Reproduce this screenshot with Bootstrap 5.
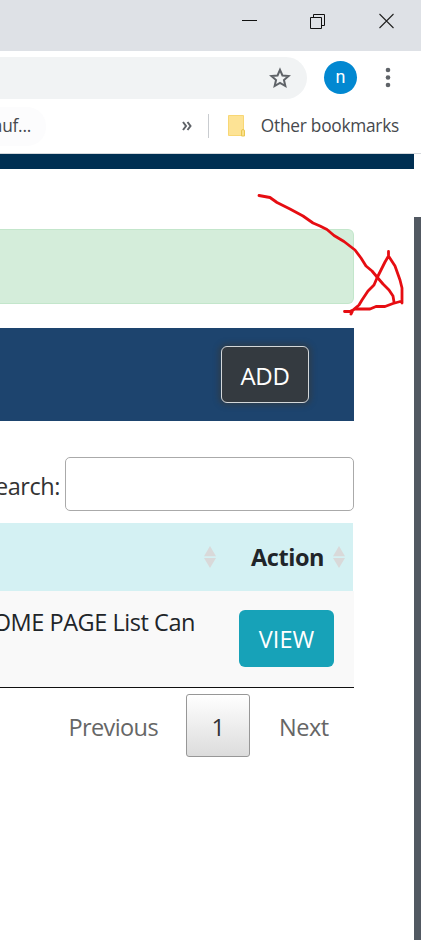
<!DOCTYPE html>
<html lang="en">
<head>
<meta charset="utf-8">
<meta name="viewport" content="width=device-width, initial-scale=1">
<title>Home page list</title>
<link href="https://cdn.jsdelivr.net/npm/bootstrap@5.3.0/dist/css/bootstrap.min.css" rel="stylesheet">
<style>
body{font-family:"Open Sans","Noto Sans",sans-serif;font-size:23.5px;line-height:36px;letter-spacing:-.45px;color:#212529;background:#fff;width:421px;height:940px;overflow:hidden}
svg{display:block;flex:none}
.titlebar{height:51px;background:#dee1e6;padding:13px 26px 0 242px}
.restore{margin-right:2px}
.toolbar{height:54px;padding:6px 26px 0 0}
.omnibox{width:307px;height:42px;background:#f1f3f4;border-radius:0 21px 21px 0;padding-right:16px}
.avatar{width:33px;height:33px;background:#0288d1;color:#fff;font:400 18px/31px Roboto,sans-serif;margin-left:17px;letter-spacing:0}
.bookmarks{height:49px;border-bottom:1px solid #d5d8dc;font-size:17.3px;line-height:24px;letter-spacing:-.25px;color:#46494d;padding-bottom:6px}
.bm-tab{width:46px;height:39px;border-radius:0 19px 19px 0;background:#fcfcfd;padding-right:15px}
.bm-more{margin-left:136px}
.bm-rule{width:1px;height:24px;background:#c9ccd0;margin-left:16px}
.bm-other{margin-left:auto;margin-right:22px}
.page-col{width:414px}
.brandbar{height:15px;background:#002f52}
.inner{width:354px}
.notice{height:75px;margin-top:60px;background:#d4edda;border:1px solid #c3e6cb;border-left:0;border-radius:0 6px 6px 0}
.panel-head{height:93px;margin-top:24px;background:#1d446e;padding:18px 45px 0 0}
.btn-add,.btn-view{height:57px;line-height:36px;color:#fff;border-radius:6px;flex:none}
.btn-add{width:88px;font-size:24px;letter-spacing:-.3px;background:#343a40;border:1px solid #d3d7da;padding:2px 0 0;box-shadow:0 0 5px 3px rgba(52,58,64,.6)}
.btn-view{width:95px;font-size:23.5px;letter-spacing:0;background:#17a2b8;border:0;padding:0}
.search-line{height:54px;margin-top:36px;color:#333}
.search-line label{padding-top:3px}
.search-line input{width:289px;height:54px;border:1px solid #aaa;border-radius:5px;padding:5px;margin-left:5px;background:transparent}
.head-row{width:353px;height:68px;margin-top:12px;background:#d4f1f3;font-weight:700;padding-right:8px}
.head-row span{margin:0 9px 0 35px}
.data-row{height:97px;background:#f9f9f9;border-bottom:1px solid #111;padding:19px 20px 0 0}
.data-row>span{margin-top:-6px;margin-right:44px}
.pager{height:63px;margin-top:6px;color:#666}
.pager .current{width:64px;height:63px;border:1px solid #979797;border-radius:3px;background:linear-gradient(#fff,#dcdcdc);color:#333;padding-top:3px}
.pager .prev{margin-right:28px;padding-top:3px;letter-spacing:-.6px}
.pager .next{width:49px;margin:0 26px 0 29px;padding-top:3px;letter-spacing:-.5px}
.scroller{width:7px;height:723px;margin-top:63px;background:#525962}
.drawn{left:250px;top:185px}
</style>
<script src="https://cdn.jsdelivr.net/npm/bootstrap@5.3.0/dist/js/bootstrap.bundle.min.js"></script>
</head>
<body class="position-relative text-nowrap">
<header>
  <div class="titlebar d-flex justify-content-between">
    <svg width="16" height="16"><path d="M0 7.500h15" stroke="#111"/></svg>
    <svg class="restore" width="16" height="17" fill="none" stroke="#111"><path d="M.5 4.500h11v11H.5zM3.500 4.500v-3h11v11h-3"/></svg>
    <svg width="16" height="16" fill="none" stroke="#222" stroke-width="1.100"><path d="M.5 1l14 14M14.500 1l-14 14"/></svg>
  </div>
  <div class="toolbar d-flex align-items-start">
    <div class="omnibox d-flex justify-content-end align-items-center">
      <svg width="22" height="22" viewBox="0 0 22 22" fill="none" stroke="#5f6368" stroke-width="2"><path d="M11 2.800l2.450 5.650 6.150.55-4.650 4.050 1.400 6L11 15.900l-5.350 3.150 1.400-6L2.400 9l6.150-.55z"/></svg>
    </div>
    <div class="avatar rounded-circle text-center mt-1">n</div>
    <svg class="ms-auto mt-2" width="14" height="26" fill="#5f6368"><circle cx="7" cy="5" r="2.300"/><circle cx="7" cy="12.500" r="2.300"/><circle cx="7" cy="20" r="2.300"/></svg>
  </div>
  <div class="bookmarks d-flex align-items-center">
    <div class="bm-tab d-flex justify-content-end align-items-center">auf...</div>
    <svg class="bm-more" width="10" height="10" fill="none" stroke="#5f6368" stroke-width="2"><path d="M1 1l3 4-3 4M5.500 1l3 4-3 4"/></svg>
    <div class="bm-rule"></div>
    <svg class="ms-3" width="22" height="24"><path d="M3.500 1.500h15v20h-15z" fill="#fde395" stroke="#f8d775"/><path d="M16.500 22v-5a1.500 1.500 0 0 1 3 0v5z" fill="#fbe08a" stroke="#e9c750"/></svg>
    <span class="bm-other">Other bookmarks</span>
  </div>
</header>
<div class="d-flex">
  <main class="page-col">
    <div class="brandbar"></div>
    <div class="inner">
      <div class="notice"></div>
      <div class="panel-head d-flex justify-content-end"><button class="btn btn-add">ADD</button></div>
      <div class="search-line d-flex justify-content-end align-items-center"><label for="q">earch:</label><input id="q" type="text"></div>
      <div class="head-row d-flex justify-content-end align-items-center">
        <svg width="12" height="22" fill="#d9d9d9"><path d="M6 0l6 10.300H0zM0 12h12L6 22z"/></svg>
        <span>Action</span>
        <svg width="12" height="22" fill="#d9d9d9"><path d="M6 0l6 10.300H0zM0 12h12L6 22z"/></svg>
      </div>
      <div class="data-row d-flex justify-content-end align-items-start"><span>OME PAGE List Can</span><button class="btn btn-view">VIEW</button></div>
      <div class="pager d-flex justify-content-end align-items-center"><span class="prev">Previous</span><span class="current d-flex align-items-center justify-content-center">1</span><span class="next">Next</span></div>
    </div>
  </main>
  <div class="scroller"></div>
</div>
<svg class="drawn position-absolute" width="165" height="135" fill="none" stroke="#e60d12" stroke-width="2.800" stroke-linecap="round" stroke-linejoin="round"><path d="M9 10.500L20 12.500 27 17.500 40 24 53 31 63 38 70 41 77 44.500 84 50.500 94 56.500 105 65 111 73 116 81 122 86 127 92 133 99 139 105 143 111 144 117"/><path d="M138.500 66.500V71L135 77 131 85 127 93 124 100 118 106 112 115 109 120 103 125 101 129M138.500 71L145 81 150 95 152 103V118M94.500 126.500H100L105 124H120L126 121.500H135L143 118.500 152 116"/></svg>
</body>
</html>
